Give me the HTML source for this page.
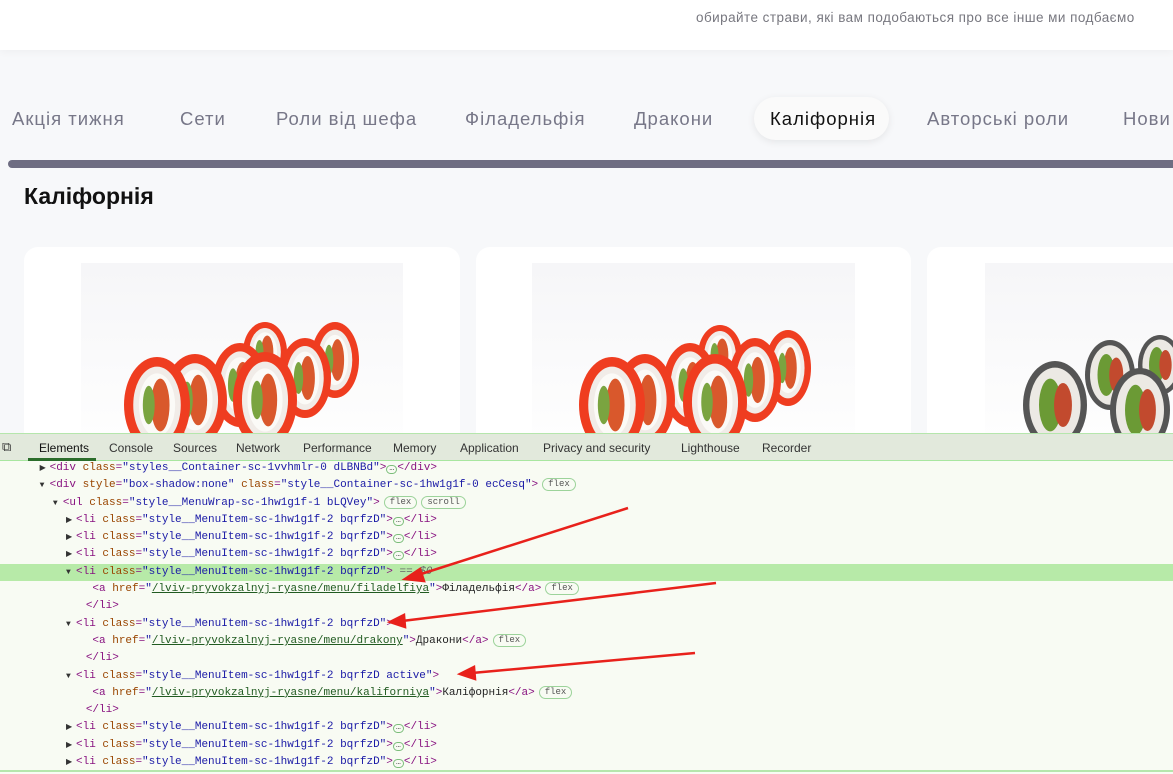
<!DOCTYPE html>
<html><head><meta charset="utf-8"><style>
*{margin:0;padding:0;box-sizing:border-box}
body{width:1173px;height:774px;overflow:hidden;background:#f7f8fa;font-family:"Liberation Sans",sans-serif;position:relative}
.top{position:absolute;left:0;top:0;width:1173px;height:50px;background:#fff;box-shadow:0 2px 8px rgba(0,0,0,.04)}
.top span{position:absolute;left:696px;top:10px;font-size:13.5px;letter-spacing:.45px;color:#77777f}
.nav{position:absolute;top:108px;font-size:18.5px;letter-spacing:1px;color:#777788;white-space:nowrap}
.pill{position:absolute;left:754px;top:97px;width:135px;height:43px;border-radius:22px;background:#fafafa;box-shadow:0 2px 8px rgba(0,0,0,.08)}
.bar{position:absolute;left:8px;top:160px;width:1170px;height:8px;border-radius:4px;background:#6e6d82}
h1{position:absolute;left:24px;top:183px;font-size:23px;font-weight:bold;color:#111}
.card{position:absolute;top:247px;height:200px;background:#fff;border-radius:14px}
.img{position:absolute;top:263px;height:180px;background:linear-gradient(#f6f6f8,#fefefe)}
.dev{position:absolute;left:0;top:433px;width:1173px;height:341px;background:#f8fbf3}
.tabs{position:absolute;left:0;top:0;width:1173px;height:28px;background:#e2e9dc;border-top:1px solid #b5e6ac;border-bottom:1px solid #a8e6a0;font-size:12px;color:#333}
.tabs span{position:absolute;top:7px}
.code{position:absolute;left:0;top:27px;width:1173px;font-family:"Liberation Mono",monospace;font-size:11px;line-height:17.3px}
.l{height:17.3px;white-space:pre;color:#881280;position:relative}
.hl{background:#b7eaa8}
.a{color:#994500}.v{color:#1a1aa6}.u{text-decoration:underline;color:#215b21}.k{color:#222}
.b{display:inline-block;border:1px solid #9cd39a;border-radius:8px;font-size:9px;color:#555;padding:0 5px;line-height:11px;margin-left:4px;vertical-align:1px}
.d{display:inline-block;width:11px;height:9px;border:1px solid #7bbd7a;border-radius:5px;font-size:8px;line-height:5px;color:#333;text-align:center;vertical-align:0}
.tri{color:#333;font-size:8px;display:inline-block;width:10px}
</style></head><body>
<div class="top"><span>обирайте страви, які вам подобаються про все інше ми подбаємо</span></div>
<div class="pill"></div>
<div class="nav" style="left:12px">Акція тижня</div>
<div class="nav" style="left:180px">Сети</div>
<div class="nav" style="left:276px">Роли від шефа</div>
<div class="nav" style="left:465px">Філадельфія</div>
<div class="nav" style="left:634px">Дракони</div>
<div class="nav" style="left:770px;color:#111">Каліфорнія</div>
<div class="nav" style="left:927px">Авторські роли</div>
<div class="nav" style="left:1123px">Нови</div>
<div class="bar"></div>
<h1>Каліфорнія</h1>
<div class="card" style="left:24px;width:436px"></div>
<div class="card" style="left:476px;width:435px"></div>
<div class="card" style="left:927px;width:260px"></div>
<div class="img" style="left:81px;width:322px"></div>
<div class="img" style="left:532px;width:323px"></div>
<div class="img" style="left:985px;width:200px"></div>
<svg style="position:absolute;left:0;top:0" width="1173" height="433">
<defs>
<g id="r"><ellipse rx="1" ry="1" fill="#ef3d20"/><ellipse rx=".72" ry=".8" fill="#f1ece8"/><ellipse rx=".55" ry=".66" fill="#fbfaf7"/><ellipse cx=".1" rx=".28" ry=".55" fill="#d9582c"/><ellipse cx="-.25" rx=".18" ry=".4" fill="#7aa440"/></g>
<g id="s"><ellipse rx="1" ry="1" fill="#555"/><ellipse rx=".8" ry=".85" fill="#ece9e4"/><ellipse cx="-.15" rx=".35" ry=".6" fill="#6b9a35"/><ellipse cx=".25" rx=".28" ry=".5" fill="#c24a2e"/></g>
</defs>
<use href="#r" transform="translate(335,360) scale(24,38)"/>
<use href="#r" transform="translate(265,352) scale(22,30)"/>
<use href="#r" transform="translate(305,378) scale(26,40)"/>
<use href="#r" transform="translate(240,385) scale(28,42)"/>
<use href="#r" transform="translate(195,400) scale(32,46)"/>
<use href="#r" transform="translate(265,400) scale(32,48)"/>
<use href="#r" transform="translate(157,405) scale(33,48)"/>
<use href="#r" transform="translate(788,368) scale(23,38)"/>
<use href="#r" transform="translate(720,355) scale(22,30)"/>
<use href="#r" transform="translate(755,380) scale(26,42)"/>
<use href="#r" transform="translate(690,385) scale(27,42)"/>
<use href="#r" transform="translate(645,400) scale(30,46)"/>
<use href="#r" transform="translate(715,402) scale(32,48)"/>
<use href="#r" transform="translate(612,405) scale(33,48)"/>
<use href="#s" transform="translate(1160,365) scale(22,30)"/>
<use href="#s" transform="translate(1110,375) scale(25,35)"/>
<use href="#s" transform="translate(1140,410) scale(30,42)"/>
<use href="#s" transform="translate(1055,405) scale(32,44)"/>
</svg>
<div class="dev">
<div class="tabs">
<span style="left:2px;top:5px;font-size:13px">⧉</span>
<span style="left:39px;color:#111">Elements</span><div style="position:absolute;left:28px;top:24px;width:68px;height:3px;background:#2b6d2b"></div>
<span style="left:109px">Console</span><span style="left:173px">Sources</span><span style="left:236px">Network</span><span style="left:303px">Performance</span><span style="left:393px">Memory</span><span style="left:460px">Application</span><span style="left:543px">Privacy and security</span><span style="left:681px">Lighthouse</span><span style="left:762px">Recorder</span>
</div>
<div class="code">
<div class="l">      <span class="tri">▶</span>&lt;div <span class="a">class</span>=<span class="v">"styles__Container-sc-1vvhmlr-0 dLBNBd"</span>&gt;<span class="d">…</span>&lt;/div&gt;</div>
<div class="l">      <span class="tri">▼</span>&lt;div <span class="a">style</span>=<span class="v">"box-shadow:none"</span> <span class="a">class</span>=<span class="v">"style__Container-sc-1hw1g1f-0 ecCesq"</span>&gt;<span class="b">flex</span></div>
<div class="l">        <span class="tri">▼</span>&lt;ul <span class="a">class</span>=<span class="v">"style__MenuWrap-sc-1hw1g1f-1 bLQVey"</span>&gt;<span class="b">flex</span><span class="b">scroll</span></div>
<div class="l">          <span class="tri">▶</span>&lt;li <span class="a">class</span>=<span class="v">"style__MenuItem-sc-1hw1g1f-2 bqrfzD"</span>&gt;<span class="d">…</span>&lt;/li&gt;</div>
<div class="l">          <span class="tri">▶</span>&lt;li <span class="a">class</span>=<span class="v">"style__MenuItem-sc-1hw1g1f-2 bqrfzD"</span>&gt;<span class="d">…</span>&lt;/li&gt;</div>
<div class="l">          <span class="tri">▶</span>&lt;li <span class="a">class</span>=<span class="v">"style__MenuItem-sc-1hw1g1f-2 bqrfzD"</span>&gt;<span class="d">…</span>&lt;/li&gt;</div>
<div class="l hl">          <span class="tri">▼</span>&lt;li <span class="a">class</span>=<span class="v">"style__MenuItem-sc-1hw1g1f-2 bqrfzD"</span>&gt; <span style="color:#666;font-style:italic">== $0</span></div>
<div class="l">              &lt;a <span class="a">href</span>=<span class="v">"</span><span class="u">/lviv-pryvokzalnyj-ryasne/menu/filadelfiya</span><span class="v">"</span>&gt;<span class="k">Філадельфія</span>&lt;/a&gt;<span class="b">flex</span></div>
<div class="l">             &lt;/li&gt;</div>
<div class="l">          <span class="tri">▼</span>&lt;li <span class="a">class</span>=<span class="v">"style__MenuItem-sc-1hw1g1f-2 bqrfzD"</span>&gt;</div>
<div class="l">              &lt;a <span class="a">href</span>=<span class="v">"</span><span class="u">/lviv-pryvokzalnyj-ryasne/menu/drakony</span><span class="v">"</span>&gt;<span class="k">Дракони</span>&lt;/a&gt;<span class="b">flex</span></div>
<div class="l">             &lt;/li&gt;</div>
<div class="l">          <span class="tri">▼</span>&lt;li <span class="a">class</span>=<span class="v">"style__MenuItem-sc-1hw1g1f-2 bqrfzD active"</span>&gt;</div>
<div class="l">              &lt;a <span class="a">href</span>=<span class="v">"</span><span class="u">/lviv-pryvokzalnyj-ryasne/menu/kaliforniya</span><span class="v">"</span>&gt;<span class="k">Каліфорнія</span>&lt;/a&gt;<span class="b">flex</span></div>
<div class="l">             &lt;/li&gt;</div>
<div class="l">          <span class="tri">▶</span>&lt;li <span class="a">class</span>=<span class="v">"style__MenuItem-sc-1hw1g1f-2 bqrfzD"</span>&gt;<span class="d">…</span>&lt;/li&gt;</div>
<div class="l">          <span class="tri">▶</span>&lt;li <span class="a">class</span>=<span class="v">"style__MenuItem-sc-1hw1g1f-2 bqrfzD"</span>&gt;<span class="d">…</span>&lt;/li&gt;</div>
<div class="l">          <span class="tri">▶</span>&lt;li <span class="a">class</span>=<span class="v">"style__MenuItem-sc-1hw1g1f-2 bqrfzD"</span>&gt;<span class="d">…</span>&lt;/li&gt;</div>
</div>
<div style="position:absolute;left:0;top:337px;width:1173px;height:2px;background:#b5e6ac"></div>
<svg style="position:absolute;left:0;top:0" width="1173" height="341">
<g stroke="#e8211b" stroke-width="2.5" fill="#e8211b">
<line x1="628" y1="75" x2="418" y2="142"/><polygon points="405,146 420,136 424,148" />
<line x1="716" y1="150" x2="402" y2="188"/><polygon points="390,189 404,182 405,194"/>
<line x1="695" y1="220" x2="472" y2="240"/><polygon points="460,241 474,234 475,246"/>
</g></svg>
</div>
</body></html>
